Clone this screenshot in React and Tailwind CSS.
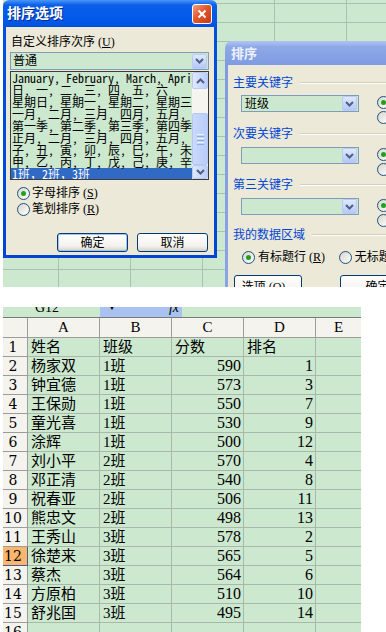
import React from "react";
import clsx from "clsx";

const listLines = [
  "January, February, March, April, May, June",
  "日, 一, 二, 三, 四, 五, 六",
  "星期日, 星期一, 星期二, 星期三, 星期四",
  "一月, 二月, 三月, 四月, 五月, 六月",
  "第一季, 第二季, 第三季, 第四季",
  "正月, 二月, 三月, 四月, 五月, 六月",
  "子, 丑, 寅, 卯, 辰, 巳, 午, 未, 申",
  "甲, 乙, 丙, 丁, 戊, 己, 庚, 辛, 壬",
];

const rows = [
  ["杨家双", "1班", 590, 1],
  ["钟宜德", "1班", 573, 3],
  ["王保勋", "1班", 550, 7],
  ["童光喜", "1班", 530, 9],
  ["涂辉", "1班", 500, 12],
  ["刘小平", "2班", 570, 4],
  ["邓正清", "2班", 540, 8],
  ["祝春亚", "2班", 506, 11],
  ["熊忠文", "2班", 498, 13],
  ["王秀山", "3班", 578, 2],
  ["徐楚来", "3班", 565, 5],
  ["蔡杰", "3班", 564, 6],
  ["方原柏", "3班", 510, 10],
  ["舒兆国", "3班", 495, 14],
];

// XP 下拉按钮
const DropBtn = () => (
  <span className="flex h-[15px] w-[15px] shrink-0 items-center justify-center rounded-[2px] border border-[#b9cbf3] bg-[image:linear-gradient(to_bottom,#dfe8fd,#b4c8f6)]">
    <svg width="9" height="6" viewBox="0 0 9 6">
      <path d="M1 1l3.5 3.5L8 1" fill="none" stroke="#4d6185" strokeWidth="2" />
    </svg>
  </span>
);

const ScrollBtn = ({ up, className }) => (
  <span
    className={clsx(
      "flex w-[16px] shrink-0 items-center justify-center rounded-[2px] border border-[#b9cbf3] bg-[image:linear-gradient(to_right,#dfe8fd,#bccef8)]",
      className
    )}
  >
    <svg width="9" height="6" viewBox="0 0 9 6">
      <path
        d={up ? "M1 5l3.5-3.5L8 5" : "M1 1l3.5 3.5L8 1"}
        fill="none"
        stroke="#4d6185"
        strokeWidth="2"
      />
    </svg>
  </span>
);

const Radio = ({ on }) => (
  <span className="flex h-[13px] w-[13px] shrink-0 items-center justify-center rounded-full border border-[#1c5180] bg-[image:linear-gradient(135deg,#d8d5cb,#ffffff)]">
    {on && <span className="h-[5px] w-[5px] rounded-full bg-[#21a121]" />}
  </span>
);

const XpButton = ({ children, className, isDefault }) => (
  <div
    className={clsx(
      "flex h-[19px] shrink-0 items-center justify-center rounded-[3px] border border-[#003c74] bg-[image:linear-gradient(to_bottom,#ffffff,#f3f2ee_70%,#d8d2c6)] text-[12px] leading-none",
      isDefault && "shadow-[inset_0_0_0_1px_#a3c1f6]",
      className
    )}
  >
    {children}
  </div>
);

const CloseBtn = () => (
  <span className="flex h-[20px] w-[20px] items-center justify-center rounded-[3px] border border-white bg-[image:linear-gradient(135deg,#f2a184,#e2582d_45%,#c43a13)]">
    <svg width="10" height="10" viewBox="0 0 10 10">
      <path d="M1.5 1.5l7 7M8.5 1.5l-7 7" stroke="white" strokeWidth="2" />
    </svg>
  </span>
);

function OptionsDialog() {
  return (
    <div className="flex h-[258px] w-[214px] shrink-0 flex-col rounded-t-[6px] bg-[image:linear-gradient(to_bottom,#4a97f9_0px,#0b5fe9_5px,#0056e6_23px,#0050e0_27px,#0046d2)] px-[3px] pb-[3px]">
      <div className="flex h-[27px] shrink-0 items-center justify-between pl-[1px] pr-[2px] pt-[1px]">
        <span className="text-[14px] font-bold leading-none text-white [text-shadow:1px_1px_0_#0a2a8a]">
          排序选项
        </span>
        <CloseBtn />
      </div>
      <div className="flex flex-1 flex-col bg-[#ece9d8] px-[4px] text-[12px]">
        <div className="mt-[8px] h-[14px] pl-[1px] leading-[14px]">
          自定义排序次序 (<u>U</u>)
        </div>

        {/* 组合框 */}
        <div className="mt-[3px] flex h-[18px] w-[199px] items-center border border-[#7f9db9] bg-[#cce8cf] pl-[2px] pr-[1px]">
          <span className="flex-1 leading-none">普通</span>
          <DropBtn />
        </div>

        {/* 列表 */}
        <div className="mt-[1px] flex h-[109px] w-[199px] border border-[#3d3d3d] bg-[#cce8cf]">
          <div className="flex-1 overflow-hidden font-['Noto_Sans_Mono_CJK_SC','Noto_Sans_CJK_SC',monospace] text-[12px] leading-[12px]">
            {listLines.map((t) => (
              <div key={t} className="whitespace-nowrap pl-[1px]">
                {t}
              </div>
            ))}
            <div className="whitespace-nowrap bg-[#316ac5] pl-[1px] text-white">
              1班，2班，3班
            </div>
          </div>
          <div className="flex w-[16px] flex-col bg-[#f5f4ef]">
            <ScrollBtn up className="h-[17px]" />
            <div className="h-[24px]" />
            <div className="flex h-[52px] flex-col items-center justify-center gap-[1px] rounded-[2px] border border-[#b4c8f4] bg-[image:linear-gradient(to_right,#cad9fc,#b9cdf9)]">
              <span className="h-[1px] w-[7px] bg-[#eef3fe]" />
              <span className="h-[1px] w-[7px] bg-[#8faae4]" />
              <span className="h-[1px] w-[7px] bg-[#eef3fe]" />
              <span className="h-[1px] w-[7px] bg-[#8faae4]" />
              <span className="h-[1px] w-[7px] bg-[#eef3fe]" />
              <span className="h-[1px] w-[7px] bg-[#8faae4]" />
            </div>
            <div className="flex-1" />
            <ScrollBtn className="h-[14px]" />
          </div>
        </div>

        <div className="mt-[5px] flex h-[16px] items-center gap-[2px] pl-[7px]">
          <Radio on />
          <span className="leading-none">字母排序 (<u>S</u>)</span>
        </div>
        <div className="flex h-[16px] items-center gap-[2px] pl-[7px]">
          <Radio />
          <span className="leading-none">笔划排序 (<u>R</u>)</span>
        </div>

        <div className="mt-[16px] flex gap-[9px] pl-[47px]">
          <XpButton isDefault className="w-[71px]">
            确定
          </XpButton>
          <XpButton className="w-[71px]">取消</XpButton>
        </div>
      </div>
    </div>
  );
}

const GroupLabel = ({ children, className }) => (
  <div className={clsx("flex h-[14px] shrink-0 items-center", className)}>
    <span className="whitespace-nowrap leading-none text-[#0046d5]">{children}</span>
    <span className="ml-[7px] h-[2px] flex-1 border-t border-b border-t-[#d0d0bf] border-b-white" />
  </div>
);

const KeyRow = ({ value, className }) => (
  <div className={clsx("flex h-[30px] shrink-0 items-start", className)}>
    <div className="ml-[8px] flex h-[17px] w-[118px] shrink-0 items-center border border-[#7f9db9] bg-[#cce8cf] pl-[3px] pr-[1px]">
      <span className="flex-1 leading-none">{value}</span>
      <DropBtn />
    </div>
    <div className="ml-[18px] flex flex-col">
      <div className="flex h-[15px] items-center gap-[2px] whitespace-nowrap">
        <Radio on />
        <span className="leading-none">升序 (A)</span>
      </div>
      <div className="flex h-[15px] items-center gap-[2px] whitespace-nowrap">
        <Radio />
        <span className="leading-none">降序 (D)</span>
      </div>
    </div>
  </div>
);

function SortDialog() {
  return (
    <div className="ml-[8px] mt-[41px] flex h-[260px] w-[200px] shrink-0 flex-col rounded-tl-[7px] bg-[image:linear-gradient(to_bottom,#b0c4f3_0px,#8ea8e7_6px,#7f9ce2_24px,#8aa5e6)] pl-[3px]">
      <div className="flex h-[24px] shrink-0 items-center pl-[3px] pt-[1px] text-[13px] font-bold leading-none text-[#edf1fc]">
        排序
      </div>
      <div className="flex flex-1 flex-col bg-[#ece9d8] pl-[5px] text-[12px]">
        <GroupLabel className="mt-[11px]">主要关键字</GroupLabel>
        <KeyRow className="mt-[5px]" value="班级" />
        <GroupLabel className="mt-[2px]">次要关键字</GroupLabel>
        <KeyRow className="mt-[6px]" />
        <GroupLabel className="mt-[1px]">第三关键字</GroupLabel>
        <KeyRow className="mt-[6px]" />
        <GroupLabel>我的数据区域</GroupLabel>
        <div className="mt-[8px] flex h-[14px] shrink-0 items-center whitespace-nowrap pl-[9px]">
          <div className="flex w-[102px] items-center gap-[3px]">
            <Radio on />
            <span className="leading-none">有标题行 (<u>R</u>)</span>
          </div>
          <div className="flex items-center gap-[3px]">
            <Radio />
            <span className="leading-none">无标题行 (<u>W</u>)</span>
          </div>
        </div>
        <div className="mt-[11px] flex shrink-0 pl-[1px]">
          <XpButton className="h-[23px] w-[68px]">选项 (O)...</XpButton>
          <XpButton className="ml-[38px] h-[23px] w-[75px]">确定</XpButton>
        </div>
      </div>
    </div>
  );
}

function Desktop() {
  return (
    <div className="flex h-[287px] w-[383px] items-start overflow-hidden bg-[#cce8cf] bg-[image:linear-gradient(to_right,#abc0ad_1px,transparent_1px),linear-gradient(to_bottom,#abc0ad_1px,transparent_1px)] bg-[length:72px_19px] bg-[position:55px_3px]">
      <OptionsDialog />
      <SortDialog />
    </div>
  );
}

function FormulaBar() {
  return (
    <div className="flex h-[10px] w-[358px] overflow-hidden bg-[#cce8cf] text-[14px]">
      <div className="w-[97px] shrink-0 pl-[32px]">
        <div className="mt-[-6px] leading-[14px]">G12</div>
      </div>
      <div className="flex w-[82px] shrink-0 bg-[#a9c2f0]">
        <div className="mt-[-7px] pl-[7px] text-[10px] leading-[14px]">▼</div>
        <div className="mt-[-6px] ml-[52px] italic leading-[14px]">fx</div>
      </div>
    </div>
  );
}

const HeadCell = ({ children, last }) => (
  <div
    className={clsx(
      "flex h-[20px] items-center justify-center border-b border-[#9c9c9c] bg-[#f4f3ed] text-[15px] leading-none",
      !last && "border-r"
    )}
  >
    {children}
  </div>
);

const RowHead = ({ n }) => (
  <div
    className={clsx(
      "flex h-[19px] items-center justify-center border-b border-r pr-[4px] font-['DejaVu_Serif',serif] text-[14px] leading-none",
      n === 12 ? "border-[#4a5a8a] bg-[#f9b66c]" : "border-[#9c9c9c] bg-[#f4f3ed]"
    )}
  >
    {n}
  </div>
);

const Cell = ({ children, right, last }) => (
  <div
    className={clsx(
      "flex h-[19px] items-center overflow-hidden whitespace-nowrap border-b border-[#a8b9a9] bg-[#cce8cf] leading-none",
      right ? "justify-end pr-[2px] text-[16px]" : "pl-[3px] text-[15px]",
      !last && "border-r"
    )}
  >
    {children}
  </div>
);

function Sheet() {
  return (
    <div className="w-[358px]">
      <FormulaBar />
      <div className="grid grid-cols-[25px_72px_72px_72px_72px_45px] border-t border-[#7a7a7a]">
        <HeadCell />
        <HeadCell>A</HeadCell>
        <HeadCell>B</HeadCell>
        <HeadCell>C</HeadCell>
        <HeadCell>D</HeadCell>
        <HeadCell last>E</HeadCell>

        <RowHead n={1} />
        <Cell>姓名</Cell>
        <Cell>班级</Cell>
        <Cell>分数</Cell>
        <Cell>排名</Cell>
        <Cell last />

        {rows.map(([name, cls, score, rank], i) => (
          <React.Fragment key={name}>
            <RowHead n={i + 2} />
            <Cell>{name}</Cell>
            <Cell>{cls}</Cell>
            <Cell right>{score}</Cell>
            <Cell right>{rank}</Cell>
            <Cell last />
          </React.Fragment>
        ))}

        <RowHead n={16} />
        <Cell />
        <Cell />
        <Cell />
        <Cell />
        <Cell last />
      </div>
    </div>
  );
}

export default function App() {
  return (
    <div className="h-[632px] w-[386px] overflow-hidden bg-white pl-[3px] font-['Liberation_Serif','Noto_Sans_CJK_SC',serif] text-black">
      <Desktop />
      <div className="h-[20px]" />
      <Sheet />
    </div>
  );
}
